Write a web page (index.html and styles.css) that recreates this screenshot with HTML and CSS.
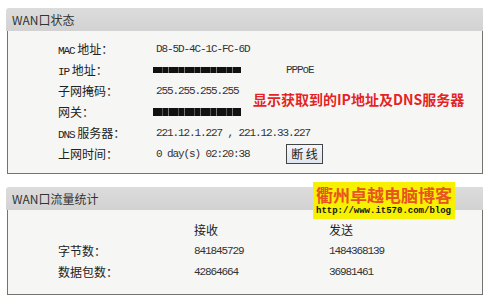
FILE: index.html
```html
<!DOCTYPE html>
<html lang="zh-CN">
<head>
  <meta charset="UTF-8">
  <title>WAN口状态</title>
  <link rel="stylesheet" href="styles.css">
</head>
<body>
  <div class="panel">
    <div class="panel-head">WAN口状态</div>
    <div class="panel-body status-body">
      <div class="row">
        <span class="label"><span class="latin">MAC</span> 地址：</span>
        <span class="value">D8-5D-4C-1C-FC-6D</span>
      </div>
      <div class="row">
        <span class="label"><span class="latin">IP</span> 地址：</span>
        <span class="value"><span class="redact"></span></span>
        <span class="value">PPPoE</span>
      </div>
      <div class="row">
        <span class="label">子网掩码：</span>
        <span class="value">255.255.255.255</span>
      </div>
      <div class="row">
        <span class="label">网关：</span>
        <span class="value"><span class="redact tall"></span></span>
      </div>
      <div class="row">
        <span class="label"><span class="latin">DNS</span> 服务器：</span>
        <span class="value wide">221.12.1.227 , 221.12.33.227</span>
      </div>
      <div class="row">
        <span class="label">上网时间：</span>
        <span class="value">0 day(s) 02:20:38</span>
        <span><button class="btn">断 线</button></span>
      </div>
      <div class="note">显示获取到的IP地址及DNS服务器</div>
    </div>
  </div>

  <div class="panel">
    <div class="panel-head">WAN口流量统计</div>
    <div class="panel-body stats-body">
      <div class="row stats">
        <span class="label"></span>
        <span class="head-cell">接收</span>
        <span class="head-cell">发送</span>
      </div>
      <div class="row stats">
        <span class="label">字节数：</span>
        <span class="value">841845729</span>
        <span class="value">1484368139</span>
      </div>
      <div class="row stats">
        <span class="label">数据包数：</span>
        <span class="value">42864664</span>
        <span class="value">36981461</span>
      </div>
    </div>
    <div class="stamp">
      <div class="stamp-title">衢州卓越电脑博客</div>
      <div class="stamp-url">http://www.it570.com/blog</div>
    </div>
  </div>
</body>
</html>
```

FILE: styles.css
```css
:root {
  --head-bg: #d6d6d6;
  --body-bg: #f6f6f4;
  --border: #767270;
  --text: #222;
}

* {
  box-sizing: border-box;
}

body {
  margin: 0;
  padding: 8px 4px 0 6px;
  background: #fff;
  color: var(--text);
  font-family: "Noto Sans CJK SC", "Liberation Sans", sans-serif;
  font-size: 12px;
}

.panel {
  position: relative;
  width: 477px;
  margin-bottom: 13px;
}

.panel-head {
  height: 23px;
  line-height: 23px;
  padding-left: 6px;
  background: linear-gradient(#dcdcdc, #d2d2d2);
  border-top-left-radius: 3px;
  font-size: 12px;
  color: #333;
}

.panel-body {
  position: relative;
  background: var(--body-bg);
  border: 1px solid var(--border);
  border-top: none;
  margin-left: 1px;
}

.status-body {
  padding: 7px 0 9px 50px;
}

.stats-body {
  padding: 9px 0 12px 50px;
}

.row {
  display: grid;
  grid-template-columns: 98px 130px auto;
  height: 21px;
  align-items: center;
}

.row.stats {
  grid-template-columns: 136px 135px auto;
}

.label {
  white-space: nowrap;
  color: #222;
}

.latin,
.value {
  font-family: "Liberation Mono", "DejaVu Sans Mono", monospace;
  font-size: 11px;
  letter-spacing: -1.1px;
}

.value {
  white-space: nowrap;
  color: #333;
}

.value.wide {
  grid-column: span 2;
}

.head-cell {
  color: #222;
}

.redact {
  display: inline-block;
  width: 88px;
  height: 6px;
  margin-left: -3px;
  vertical-align: middle;
  background: repeating-linear-gradient(90deg, #111 0 9px, #555 9px 10px, #111 10px 15px, #777 15px 16px);
}

.redact.tall {
  height: 8px;
}

.btn {
  height: 20px;
  width: 37px;
  padding: 0;
  border: 1px solid #444;
  background: linear-gradient(#f2f6fb, #dfe6ee);
  font-family: "Noto Sans CJK SC", sans-serif;
  font-size: 12px;
  color: #222;
}

.note {
  position: absolute;
  left: 245px;
  top: 58px;
  font-size: 14px;
  font-weight: bold;
  color: #e42424;
  text-shadow: 0 0 2px #fff;
  white-space: nowrap;
}

.stamp {
  position: absolute;
  left: 307px;
  top: -5px;
  width: 142px;
  height: 37px;
  padding: 2px 3px 0;
  background: #f7f000;
}

.stamp-title {
  font-size: 17px;
  line-height: 21px;
  font-weight: bold;
  color: #e85420;
  letter-spacing: 0;
  white-space: nowrap;
}

.stamp-url {
  font-family: "Liberation Mono", monospace;
  font-size: 9px;
  line-height: 12px;
  font-weight: bold;
  color: #111;
  white-space: nowrap;
}
```
